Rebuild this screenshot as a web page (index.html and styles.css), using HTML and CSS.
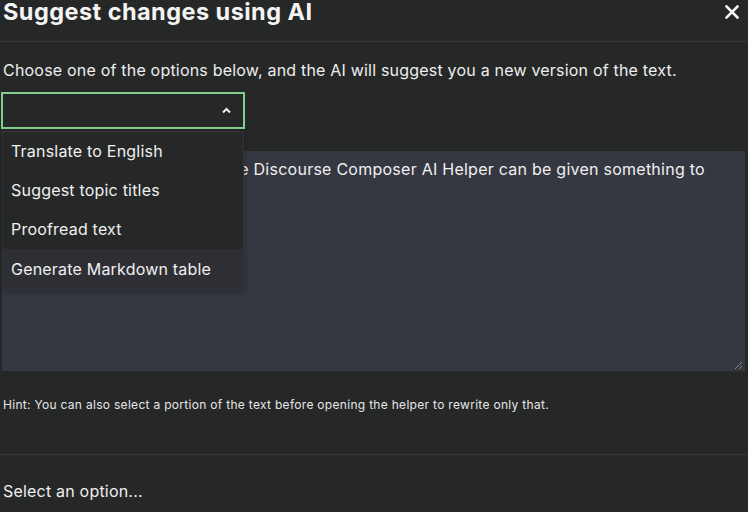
FILE: index.html
```html
<!DOCTYPE html>
<html lang="en">
<head>
<meta charset="utf-8">
<title>Suggest changes using AI</title>
<link rel="stylesheet" href="styles.css">
</head>
<body>
<div class="modal">
  <header class="modal-header">
    <h1 class="title">Suggest changes using AI</h1>
    <button class="close" aria-label="Close">
      <svg width="14" height="14" viewBox="0 0 14 14"><path d="M1.5 1.5 L12.5 12.5 M12.5 1.5 L1.5 12.5" stroke="#f2f2f2" stroke-width="2.6" stroke-linecap="square" fill="none"/></svg>
    </button>
  </header>
  <section class="modal-body">
    <p class="desc">Choose one of the options below, and the AI will suggest you a new version of the text.</p>
    <div class="select-wrap">
      <div class="select">
        <svg class="chevron" width="9" height="7" viewBox="0 0 9 7"><path d="M1 5.5 L4.5 2 L8 5.5" stroke="#f0f0f0" stroke-width="2" fill="none"/></svg>
      </div>
      <ul class="menu">
        <li class="item">Translate to English</li>
        <li class="item">Suggest topic titles</li>
        <li class="item">Proofread text</li>
        <li class="item active">Generate Markdown table</li>
      </ul>
    </div>
    <div class="textarea">
      <p class="ta-text">This is a simple text where the Discourse Composer AI Helper can be given something to work with.</p>
      <svg class="grip" width="9" height="9" viewBox="0 0 9 9"><path d="M8 1 L1 8 M8 5 L5 8" stroke="#8a8c94" stroke-width="1" fill="none"/></svg>
    </div>
    <p class="hint">Hint: You can also select a portion of the text before opening the helper to rewrite only that.</p>
  </section>
  <footer class="modal-footer">
    <p class="status">Select an option...</p>
  </footer>
</div>
</body>
</html>
```
FILE: styles.css
```css
* { box-sizing: border-box; }
html, body {
  margin: 0;
  padding: 0;
  background: #262828;
}
body {
  width: 748px;
  height: 512px;
  overflow: hidden;
  font-family: Inter, "Noto Sans", "Liberation Sans", sans-serif;
  color: #ececec;
}
.modal { display: flex; flex-direction: column; }
.modal-header {
  height: 42px;
  display: flex;
  align-items: flex-start;
  justify-content: space-between;
  border-bottom: 1px solid #36373f;
  padding: 0 9px 0 3px;
}
.title {
  margin: 0;
  font-size: 23.5px;
  font-weight: 700;
  line-height: 24px;
  color: #f4f4f4;
  letter-spacing: 0.45px;
}
.close {
  margin-top: 5px;
  background: none;
  border: 0;
  padding: 0;
  width: 14px;
  height: 14px;
  display: flex;
}
.modal-body {
  padding: 0 3px 0 2px;
  height: 413px;
  border-bottom: 1px solid #36373f;
}
.desc {
  margin: 18px 0 0 1px;
  font-size: 16px;
  line-height: 20px;
  letter-spacing: 0.2px;
  color: #eeeeee;
}
.select-wrap {
  position: relative;
  margin-top: 12px;
  width: 244px;
  margin-left: -1px;
}
.select {
  height: 37px;
  border: 2px solid #80d08c;
  position: relative;
  display: flex;
  align-items: center;
  justify-content: flex-end;
  padding-right: 12px;
}
.menu {
  position: absolute;
  top: 39px;
  left: 1px;
  width: 242px;
  margin: 0;
  padding: 0;
  list-style: none;
  background: #262828;
  border: 1px solid #34353c;
  box-shadow: 0 2px 6px rgba(0,0,0,0.25);
  z-index: 2;
}
.item {
  height: 39.5px;
  padding: 0 0 0 8px;
  display: flex;
  align-items: center;
  font-size: 16px;
  letter-spacing: 0.2px;
  color: #f0f0f0;
}
.item:first-child { height: 38px; }
.item.active { background: #2e2f35; height: 40px; }
.textarea {
  position: relative;
  margin-top: 22px;
  height: 220px;
  background: #353741;
  padding: 8px 10px;
}
.ta-text {
  margin: 0;
  font-size: 16px;
  line-height: 20px;
  letter-spacing: 0.25px;
  color: #f0f0f0;
  width: 720px;
}
.grip { position: absolute; right: 2px; bottom: 1px; }
.hint {
  margin: 26px 0 0 1px;
  font-size: 12px;
  line-height: 16px;
  letter-spacing: 0.3px;
  color: #e6e6e6;
}
.modal-footer { padding: 0 3px; }
.status {
  margin: 26px 0 0 0;
  font-size: 16px;
  line-height: 20px;
  letter-spacing: 0.2px;
  color: #efefef;
}
```
